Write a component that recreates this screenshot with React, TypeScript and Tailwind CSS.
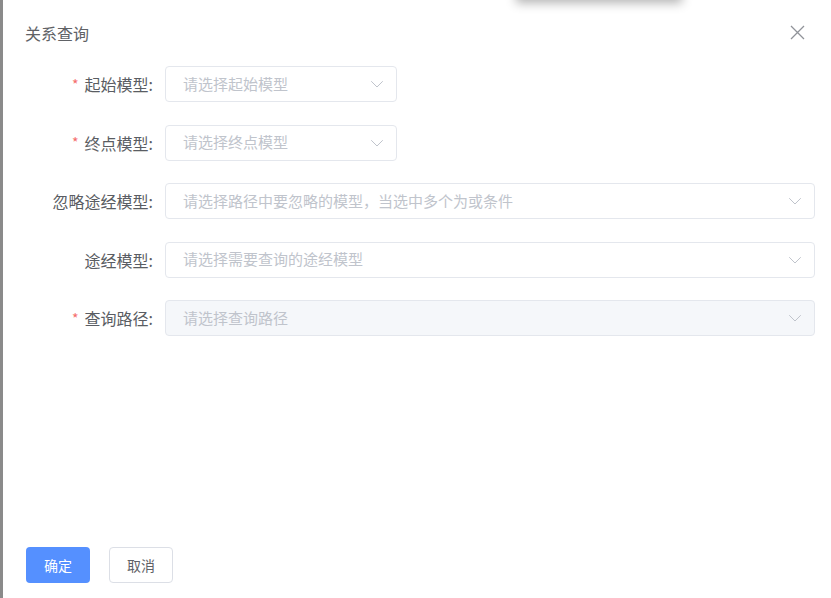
import React from "react";

const font = { fontFamily: '"Noto Sans CJK SC", "Noto Sans", sans-serif' };

function Chevron() {
  return (
    <svg width="14" height="14" viewBox="0 0 14 14" fill="none" className="shrink-0">
      <path d="M1.5 4.5 L7 10 L12.5 4.5" stroke="#c0c4cc" strokeWidth="1" strokeLinecap="round" strokeLinejoin="round" />
    </svg>
  );
}

function Row({ label, required, placeholder, wide, disabled }: { label: string; required?: boolean; placeholder: string; wide?: boolean; disabled?: boolean }) {
  return (
    <div className="flex items-center h-[36px]">
      <div className="w-[162px] pr-[12px] flex justify-end items-center text-[16px] text-[#5a5d63]">
        {required && <span className="text-[#f56c6c] mr-[6px] text-[14px]">*</span>}
        <span>{label}:</span>
      </div>
      <div
        className={`h-[36px] ${wide ? "w-[650px]" : "w-[232px]"} rounded-[4px] border ${disabled ? "bg-[#f5f7fa] border-[#e4e7ed]" : "bg-white border-[#e4e7ed]"} flex items-center justify-between pl-[17px] pr-[12px]`}
      >
        <span className="text-[15px] text-[#c0c4cc] whitespace-nowrap">{placeholder}</span>
        <Chevron />
      </div>
    </div>
  );
}

export default function App() {
  return (
    <div className="relative w-[831px] h-[598px] bg-white overflow-hidden flex" style={font}>
      <div className="w-[3px] h-full bg-[#8a8a8a] shrink-0" />
      <div className="absolute left-[516px] top-[-40px] w-[166px] h-[40px] bg-white shadow-[0_3px_10px_rgba(0,0,0,0.3)]" />
      <div className="flex-1 flex flex-col">
        <div className="flex items-center justify-between h-[66px] pl-[22px] pr-[26px] pb-[1px]">
          <span className="text-[16px] text-[#606266]">关系查询</span>
          <svg width="15" height="15" viewBox="0 0 15 15" fill="none">
            <path d="M1 1 L14 14 M14 1 L1 14" stroke="#909399" strokeWidth="1.3" />
          </svg>
        </div>
        <div className="flex flex-col gap-[22.5px]">
          <Row label="起始模型" required placeholder="请选择起始模型" />
          <Row label="终点模型" required placeholder="请选择终点模型" />
          <Row label="忽略途经模型" placeholder="请选择路径中要忽略的模型，当选中多个为或条件" wide />
          <Row label="途经模型" placeholder="请选择需要查询的途经模型" wide />
          <Row label="查询路径" required placeholder="请选择查询路径" wide disabled />
        </div>
        <div className="flex-1" />
        <div className="flex gap-[19px] pl-[23px] pb-[15px]">
          <button className="w-[64px] h-[36px] rounded-[4px] bg-[#5590ff] text-white text-[14px]">确定</button>
          <button className="w-[64px] h-[36px] rounded-[4px] bg-white border border-[#dcdfe6] text-[#606266] text-[14px]">取消</button>
        </div>
      </div>
    </div>
  );
}
